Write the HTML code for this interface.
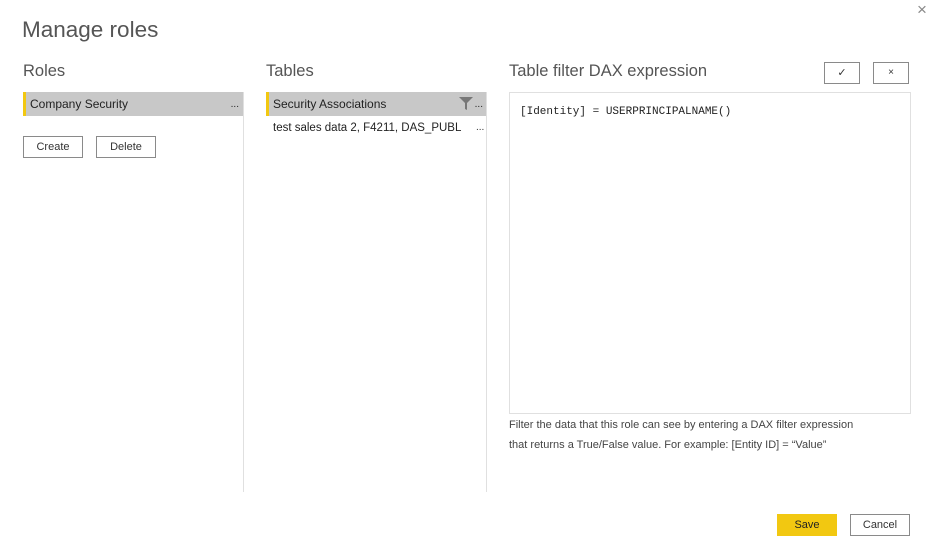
<!DOCTYPE html>
<html><head><style>
body{margin:0;width:937px;height:559px;background:#fff;font-family:"Liberation Sans",sans-serif;color:#333;position:relative;overflow:hidden}
.a{position:absolute}
.h{font-size:16.5px;color:#555}
.btn{position:absolute;border:1px solid #8a8a8a;background:#fff;font-size:11px;color:#333;text-align:center;box-sizing:border-box}
.sel{position:absolute;background:#c8c8c8;border-left:3px solid #f2c811;height:24px;box-sizing:border-box;font-size:12px;line-height:25px;padding-left:4px;color:#222}
</style></head><body>
<div class="a" style="left:22px;top:17px;font-size:22.5px;color:#555">Manage roles</div>
<div class="a" style="left:917px;top:0px;font-size:17px;color:#888">×</div>
<div class="a h" style="left:23px;top:62px">Roles</div>
<div class="a h" style="left:266px;top:62px">Tables</div>
<div class="a h" style="left:509px;top:62px">Table filter DAX expression</div>
<div class="sel" style="left:23px;top:92px;width:220px">Company Security<span style="position:absolute;right:4px;font-size:10px">...</span></div>
<div class="btn" style="left:23px;top:136px;width:60px;height:22px;line-height:21px">Create</div>
<div class="btn" style="left:96px;top:136px;width:60px;height:22px;line-height:21px">Delete</div>
<div class="a" style="left:243px;top:92px;width:1px;height:400px;background:#e0e0e0"></div>
<div class="sel" style="left:266px;top:92px;width:220px">Security Associations
<svg style="position:absolute;right:13px;top:5px" width="14" height="13"><path d="M0 0H14L8 6V13L6 12V6Z" fill="#777"/></svg><span style="position:absolute;right:3px;font-size:10px">...</span></div>
<div class="a" style="left:273px;top:122px;font-size:11.5px;color:#222">test sales data 2, F4211, DAS_PUBL</div>
<div class="a" style="left:476px;top:122px;font-size:10px">...</div>
<div class="a" style="left:486px;top:92px;width:1px;height:400px;background:#e0e0e0"></div>
<div class="btn" style="left:824px;top:62px;width:36px;height:22px;line-height:20px">✓</div>
<div class="btn" style="left:873px;top:62px;width:36px;height:22px;line-height:20px;font-size:10px">×</div>
<div class="a" style="left:509px;top:92px;width:400px;height:320px;border:1px solid #e0e0e0"></div>
<div class="a" style="left:520px;top:106px;font-family:'Liberation Mono',monospace;font-size:11px;color:#222">[Identity] = USERPRINCIPALNAME()</div>
<div class="a" style="left:509px;top:415px;width:400px;font-size:11px;line-height:20px;color:#444">Filter the data that this role can see by entering a DAX filter expression<br>that returns a True/False value. For example: [Entity ID] = “Value”</div>
<div class="btn" style="left:777px;top:514px;width:60px;height:22px;line-height:21px;background:#f2c811;border-color:#f2c811;color:#222">Save</div>
<div class="btn" style="left:850px;top:514px;width:60px;height:22px;line-height:21px">Cancel</div>
</body></html>
